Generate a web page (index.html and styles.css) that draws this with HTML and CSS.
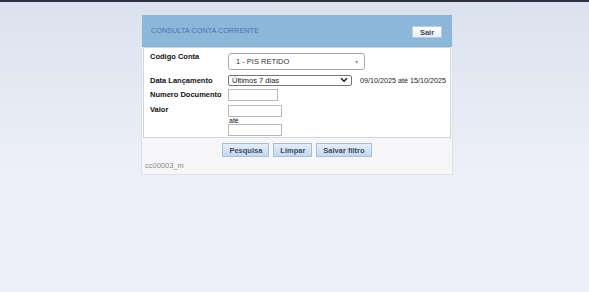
FILE: index.html
```html
<html>
<head>
    <title>Consulta Conta Corrente</title>
    <link rel="stylesheet" href="styles.css">
</head>
<body>
    <div id="top-bar"></div>
    <div id="panel">
        <div id="panel-header">
            <span id="panel-title">CONSULTA CONTA CORRENTE</span>
            <button class="btn btn-light" id="sair-btn">Sair</button>
        </div>
        <div id="panel-body">
            <div class="row row-codigo">
                <div class="label">Codigo Conta</div>
                <div class="field">
                    <div class="combo">
                        <span>1 - PIS RETIDO</span>
                        <span class="combo-arrow">&#9662;</span>
                    </div>
                </div>
            </div>
            <div class="row row-data">
                <div class="label">Data Lançamento</div>
                <div class="field">
                    <div class="select">
                        <span>Últimos 7 dias</span>
                        <svg width="8" height="6" viewBox="0 0 8 6"><path d="M1 1.2 L4 4.2 L7 1.2" fill="none" stroke="#222" stroke-width="1.6"/></svg>
                    </div>
                    <span class="period">09/10/2025 até 15/10/2025</span>
                </div>
            </div>
            <div class="row row-numero">
                <div class="label">Numero Documento</div>
                <div class="field">
                    <input type="text" class="input input-doc">
                </div>
            </div>
            <div class="row row-valor">
                <div class="label">Valor</div>
                <div class="field field-stack">
                    <input type="text" class="input input-valor">
                    <span class="ate">até</span>
                    <input type="text" class="input input-valor">
                </div>
            </div>
        </div>
        <div id="panel-actions">
            <button class="btn btn-blue">Pesquisa</button>
            <button class="btn btn-blue">Limpar</button>
            <button class="btn btn-blue">Salvar filtro</button>
        </div>
        <div id="panel-code">cc00003_m</div>
    </div>
</body>
</html>
```

FILE: styles.css
```css
body {
    margin: 0;
    height: 292px;
    font-family: "Liberation Sans", Arial, sans-serif;
    font-size: 7.5px;
    color: #111;
    background: linear-gradient(#dbe2ef, #edf0f8 60%, #edf0f8);
}

#top-bar {
    height: 2px;
    background-color: #2e3040;
}

#panel {
    width: 310px;
    margin: 12px 0 0 141px;
    border: 1px solid #dde1e8;
    background-color: #f6f6f8;
}

#panel-header {
    height: 32px;
    background-color: #8db7d9;
    display: flex;
    align-items: center;
    justify-content: space-between;
    padding: 0 10px 0 9px;
}

#panel-title {
    color: #4873b8;
    font-size: 7.3px;
    margin-top: -2px;
}

.btn {
    font-family: "Liberation Sans", Arial, sans-serif;
    font-size: 7.5px;
    font-weight: bold;
    color: #3b4a5c;
    padding: 0;
    cursor: pointer;
}

.btn-light {
    width: 30px;
    height: 12px;
    border: 1px solid #b9cbe0;
    background: linear-gradient(#ffffff, #e6edf5);
    margin-top: 2px;
}

#panel-body {
    background-color: #ffffff;
    border: 1px solid #d2d6dc;
    margin: 0 1px;
    height: 91px;
    padding: 4px 0 0 6px;
    box-sizing: border-box;
}

.row {
    display: grid;
    grid-template-columns: 78px 1fr;
}

.label {
    font-weight: bold;
    color: #111;
    white-space: nowrap;
}

.field {
    display: flex;
    align-items: center;
}

.row-codigo {
    height: 21px;
    align-items: start;
}

.row-codigo .label {
    padding-top: 0;
}

.row-codigo .field {
    align-items: flex-start;
    padding-top: 1px;
}

.combo {
    width: 137px;
    height: 17px;
    border: 1px solid #aaaaaa;
    border-radius: 3px;
    display: flex;
    align-items: center;
    justify-content: space-between;
    padding: 0 6px 0 7px;
    box-sizing: border-box;
    color: #333;
}

.combo-arrow {
    color: #999;
    font-size: 6px;
}

.row-data {
    height: 14px;
    align-items: center;
}

.select {
    width: 124px;
    height: 11px;
    border: 1px solid #767676;
    border-radius: 2px;
    display: flex;
    align-items: center;
    justify-content: space-between;
    padding: 0 3px 0 3px;
    box-sizing: border-box;
    color: #222;
}

.period {
    margin-left: 8px;
    color: #222;
    font-size: 7.2px;
    white-space: nowrap;
}

.row-numero {
    height: 15px;
    align-items: center;
}

.input {
    height: 12px;
    border: 1px solid #b8b8b8;
    padding: 0;
    box-sizing: border-box;
    background-color: #fff;
    display: block;
}

.input-doc {
    width: 50px;
}

.row-valor {
    padding-top: 3px;
    align-items: start;
}

.field-stack {
    flex-direction: column;
    align-items: flex-start;
}

.input-valor {
    width: 54px;
}

.ate {
    font-size: 7px;
    line-height: 7px;
    height: 7px;
    margin-left: 1px;
}

#panel-actions {
    display: flex;
    justify-content: center;
    gap: 4px;
    padding: 5px 0 0 0;
}

.btn-blue {
    height: 14px;
    border: 1px solid #a9bfd8;
    background: linear-gradient(#e3eef9, #c4d8ee);
    color: #3c4d62;
    padding: 0 6px;
}

#panel-code {
    color: #8a8a8a;
    padding: 4px 0 4px 3px;
}
```
